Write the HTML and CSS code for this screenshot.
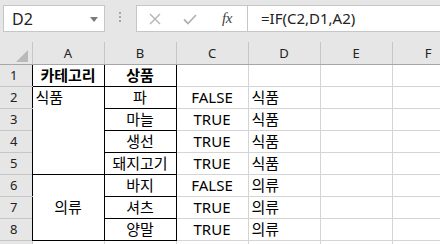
FILE: index.html
```html
<!DOCTYPE html>
<html lang="ko">
<head>
  <meta charset="UTF-8" />
  <title>Sheet</title>
  <link rel="stylesheet" href="styles.css">
</head>
<body>

<!-- Name box + formula bar -->
<div class="toolbar">
  <div class="namebox">
    <span class="ref">D2</span>
    <svg class="drop" width="8" height="5" viewBox="0 0 8 5"><path d="M0 0H8L4 5Z" fill="#7a7a7a"/></svg>
  </div>
  <div class="grip"><i></i><i></i><i></i></div>
  <div class="fbar">
    <div class="fbtns">
      <svg class="ico" width="14" height="14" viewBox="0 0 14 14"><path d="M2 2L12 12M12 2L2 12" stroke="#b3b3b3" stroke-width="1.4" fill="none"/></svg>
      <svg class="ico" width="16" height="14" viewBox="0 0 16 14"><path d="M2 7.5L6 11.5L14 3" stroke="#b3b3b3" stroke-width="1.8" fill="none"/></svg>
      <span class="fx">fx</span>
    </div>
    <div class="ftext">=IF(C2,D1,A2)</div>
  </div>
</div>

<!-- Grid -->
<table class="sheet">
  <colgroup>
    <col class="col-rh"><col class="col"><col class="col"><col class="col"><col class="col"><col class="col"><col class="col">
  </colgroup>
  <tr class="colhead">
    <th class="corner"><span class="tri"></span></th>
    <th>A</th><th>B</th><th>C</th><th>D</th><th>E</th><th>F</th>
  </tr>
  <tr>
    <th class="rh">1</th>
    <td class="b bold mid">카테고리</td><td class="b bold mid">상품</td><td></td><td></td><td></td><td></td>
  </tr>
  <tr>
    <th class="rh">2</th>
    <td class="b top" rowspan="4">식품</td><td class="b mid">파</td><td class="mid">FALSE</td><td>식품</td><td></td><td></td>
  </tr>
  <tr>
    <th class="rh">3</th>
    <td class="b mid">마늘</td><td class="mid">TRUE</td><td>식품</td><td></td><td></td>
  </tr>
  <tr>
    <th class="rh">4</th>
    <td class="b mid">생선</td><td class="mid">TRUE</td><td>식품</td><td></td><td></td>
  </tr>
  <tr>
    <th class="rh">5</th>
    <td class="b mid">돼지고기</td><td class="mid">TRUE</td><td>식품</td><td></td><td></td>
  </tr>
  <tr>
    <th class="rh">6</th>
    <td class="b mid" rowspan="3">의류</td><td class="b mid">바지</td><td class="mid">FALSE</td><td>의류</td><td></td><td></td>
  </tr>
  <tr>
    <th class="rh">7</th>
    <td class="b mid">셔츠</td><td class="mid">TRUE</td><td>의류</td><td></td><td></td>
  </tr>
  <tr>
    <th class="rh">8</th>
    <td class="b mid">양말</td><td class="mid">TRUE</td><td>의류</td><td></td><td></td>
  </tr>
  <tr>
    <th class="rh rh-last"></th>
    <td></td><td></td><td></td><td></td><td></td><td></td>
  </tr>
</table>

</body>
</html>
```

FILE: styles.css
```css
/* Basic reset */
* { margin: 0; padding: 0; box-sizing: border-box; }
body { width: 440px; height: 244px; overflow: hidden; background: #e6e6e6; font-family: "Noto Sans", "Noto Sans CJK KR", sans-serif; color: #000; }

/* Name box and formula bar */
.toolbar { display: flex; align-items: flex-start; height: 42px; padding: 5px 0 0 3px; }
.namebox { display: flex; align-items: center; justify-content: space-between; width: 102px; height: 27px; background: #fff; border: 1px solid #c6c6c6; padding: 0 6px 0 8px; }
.ref { font-size: 16px; color: #222; }
.drop { margin-top: 1px; }
.grip { display: flex; flex-direction: column; gap: 2px; width: 31px; padding: 7px 0 0 14px; }
.grip i { display: block; width: 2px; height: 2px; background: #a6a6a6; }
.fbar { display: flex; flex: 1; height: 27px; background: #fff; border: 1px solid #c6c6c6; border-right: none; }
.fbtns { display: flex; align-items: center; width: 111px; padding-left: 11px; border-right: 1px solid #c6c6c6; }
.fbtns .ico:nth-child(1) { margin-right: 20px; }
.fbtns .ico:nth-child(2) { margin-right: 24px; }
.fx { font-family: "Liberation Serif", serif; font-style: italic; font-size: 15px; color: #444; letter-spacing: -0.5px; }
.ftext { padding-left: 13px; font-size: 15px; line-height: 25px; color: #222; }

/* Grid */
.sheet { border-collapse: collapse; table-layout: fixed; width: 464px; background: #fff; }
.col-rh { width: 32px; }
.col { width: 72px; }
.sheet tr { height: 22px; }
.sheet td { border: 1px solid #d4d4d4; font-size: 15px; line-height: 20px; padding: 0 3px; white-space: nowrap; overflow: hidden; vertical-align: middle; }
.sheet th { font-weight: normal; font-size: 13px; color: #222; background: #e6e6e6; }
.colhead th { border-right: 1px solid #c6c6c6; border-bottom: 1px solid #a6a6a6; }
.corner { position: relative; }
.tri { position: absolute; right: 4px; bottom: 2px; width: 0; height: 0; border-left: 12px solid transparent; border-bottom: 12px solid #b9b9b9; }
.rh { border-bottom: 1px solid #c6c6c6; border-right: 1px solid #000; padding-right: 4px; }
.rh-last { border-right-color: #c6c6c6; }
.sheet td.b { border-color: #000; }
.bold { font-weight: bold; }
.mid { text-align: center; }
.top { vertical-align: top !important; }
```
